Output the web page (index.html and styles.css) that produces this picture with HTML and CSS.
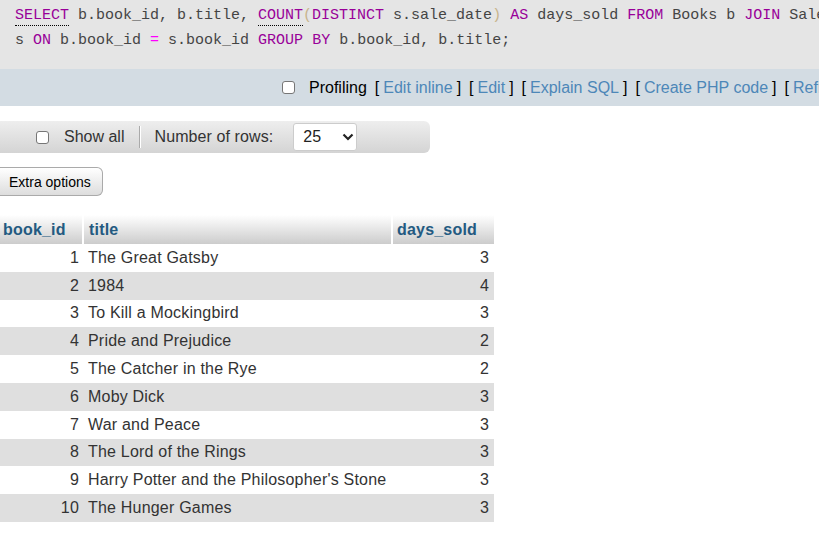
FILE: index.html
```html
<!DOCTYPE html>
<html>
<head>
<meta charset="utf-8">
<link rel="stylesheet" href="styles.css">
</head>
<body>
<div class="sql-box">
  <div class="sql-line"><span class="kw ul">SELECT</span> b.book_id, b.title, <span class="kw ul">COUNT</span><span class="paren">(</span><span class="kw">DISTINCT</span> s.sale_date<span class="paren">)</span> <span class="kw">AS</span> days_sold <span class="kw">FROM</span> Books b <span class="kw">JOIN</span> Sales</div>
  <div class="sql-line">s <span class="kw">ON</span> b.book_id <span class="op">=</span> s.book_id <span class="kw">GROUP</span> <span class="kw">BY</span> b.book_id, b.title;</div>
</div>
<div class="profiling">
  <span class="cb"></span>
  <span class="plabel">Profiling</span>
  <span class="br">[</span><a class="lnk">Edit inline</a><span class="br">]</span>
  <span class="br">[</span><a class="lnk">Edit</a><span class="br">]</span>
  <span class="br">[</span><a class="lnk">Explain SQL</a><span class="br">]</span>
  <span class="br">[</span><a class="lnk">Create PHP code</a><span class="br">]</span>
  <span class="br">[</span><a class="lnk">Refresh</a><span class="br">]</span>
</div>
<div class="navbar">
  <span class="cb"></span>
  <span class="nlabel">Show all</span>
  <span class="sep"></span>
  <span class="nlabel2">Number of rows:</span>
  <span class="select">25
    <svg class="chev" width="12" height="8" viewBox="0 0 12 8"><path d="M1.5 1.5 L6 6 L10.5 1.5" fill="none" stroke="#222" stroke-width="2.2"/></svg>
  </span>
</div>
<div class="btnrow"><span class="btn">Extra options</span></div>
<table class="data">
  <thead>
    <tr><th class="c1">book_id</th><th class="c2">title</th><th class="c3">days_sold</th></tr>
  </thead>
  <tbody>
    <tr><td class="num">1</td><td>The Great Gatsby</td><td class="num">3</td></tr>
    <tr><td class="num">2</td><td>1984</td><td class="num">4</td></tr>
    <tr><td class="num">3</td><td>To Kill a Mockingbird</td><td class="num">3</td></tr>
    <tr><td class="num">4</td><td>Pride and Prejudice</td><td class="num">2</td></tr>
    <tr><td class="num">5</td><td>The Catcher in the Rye</td><td class="num">2</td></tr>
    <tr><td class="num">6</td><td>Moby Dick</td><td class="num">3</td></tr>
    <tr><td class="num">7</td><td>War and Peace</td><td class="num">3</td></tr>
    <tr><td class="num">8</td><td>The Lord of the Rings</td><td class="num">3</td></tr>
    <tr><td class="num">9</td><td>Harry Potter and the Philosopher's Stone</td><td class="num">3</td></tr>
    <tr><td class="num">10</td><td>The Hunger Games</td><td class="num">3</td></tr>
  </tbody>
</table>
</body>
</html>
```
FILE: styles.css
```css
html, body {
  margin: 0;
  padding: 0;
  overflow: hidden;
  background: #fff;
}
body {
  font-family: "Liberation Sans", Arial, sans-serif;
  font-size: 16px;
  color: #333;
}
.sql-box {
  background: #e5e5e5;
  padding: 3px 0 16px 15px;
  height: 50px;
  white-space: nowrap;
  font-family: "Liberation Mono", "DejaVu Sans Mono", monospace;
  font-size: 15px;
  line-height: 25px;
  color: #444;
}
.kw { color: #990099; }
.ul {
  display: inline-block;
  line-height: 18px;
  border-bottom: 1px dotted #000;
}
.paren { color: #c8b48c; }
.op { color: #ff00ff; }
.profiling {
  background: #d3dce3;
  height: 37px;
  display: flex;
  align-items: center;
  padding-left: 282px;
  white-space: nowrap;
  color: #000;
}
.cb {
  display: inline-block;
  width: 13px;
  height: 13px;
  border: 1px solid #767676;
  border-radius: 3px;
  background: #fff;
  box-sizing: border-box;
  flex: none;
}
.plabel { margin-left: 14px; margin-right: 4px; }
.br { margin: 0 4px; color: #000; }
.lnk { color: #4d87b8; }
.navbar {
  margin-top: 15px;
  width: 430px;
  height: 32px;
  box-sizing: border-box;
  border-radius: 0 6px 6px 0;
  background: linear-gradient(#eeeeee, #d4d4d4);
  display: flex;
  align-items: center;
  padding-left: 36px;
  white-space: nowrap;
}
.nlabel { margin-left: 15px; color: #333; }
.sep {
  display: inline-block;
  width: 1px;
  height: 22px;
  background: #aaa;
  border-right: 1px solid #fff;
  margin-left: 15px;
  margin-right: 13px;
}
.nlabel2 { color: #333; letter-spacing: 0.1px; }
.select {
  margin-left: 20px;
  width: 64px;
  height: 28px;
  box-sizing: border-box;
  background: #fff;
  border: 1px solid #ccc;
  border-radius: 3px;
  display: flex;
  align-items: center;
  padding-left: 9px;
  color: #222;
}
.chev { margin-left: 21px; }
.btnrow { margin-top: 14px; height: 29px; }
.btn {
  display: inline-flex;
  align-items: center;
  height: 29px;
  width: 103px;
  box-sizing: border-box;
  padding-left: 9px;
  font-size: 14px;
  color: #000;
  border: 1px solid #aaa;
  border-left: none;
  border-radius: 0 6px 6px 0;
  background: linear-gradient(#ffffff, #dddddd);
}
.data {
  margin-top: 19px;
  border-collapse: collapse;
  width: 494px;
}
.data th {
  height: 29px;
  padding: 0;
  text-align: left;
  font-weight: bold;
  color: #235a81;
  background: linear-gradient(#ffffff, #cccccc);
  vertical-align: middle;
  letter-spacing: 0.2px;
}
.data th.c1 { width: 79px; padding-left: 3px; }
.data th.c2 { width: 302px; padding-left: 5px; border-left: 2px solid #fff; }
.data th.c3 { width: 97px; padding-left: 4px; border-left: 2px solid #fff; }
.data td {
  height: 27.8px;
  padding: 0 5px;
  line-height: 18px;
  vertical-align: middle;
  color: #333;
  letter-spacing: 0.2px;
}
.data td.num { text-align: right; padding-right: 4px; }
.data td:last-child { padding-right: 5px; }
.data tbody tr:nth-child(even) td { background: #dfdfdf; }
```
